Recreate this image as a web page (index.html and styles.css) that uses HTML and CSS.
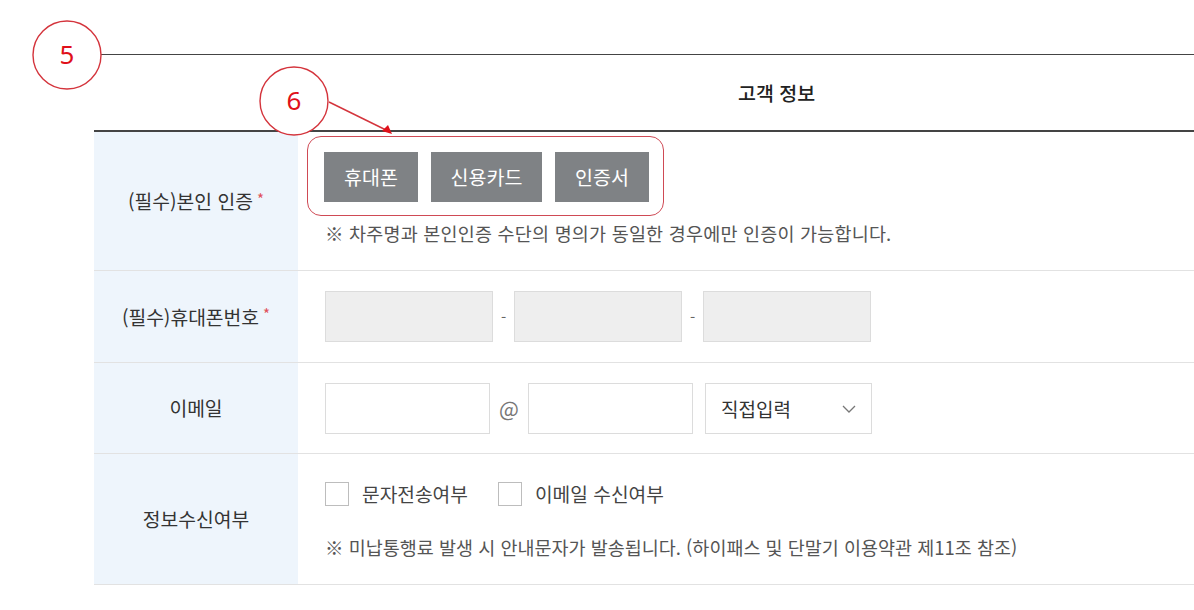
FILE: index.html
```html
<!DOCTYPE html>
<html lang="ko">
<head>
<meta charset="utf-8">
<title>고객 정보</title>
<link rel="stylesheet" href="styles.css">
</head>
<body>
<div class="page">
  <section class="info">
    <div class="title-row">고객 정보</div>

    <div class="row row-auth">
      <div class="label">(필수)본인 인증<span class="req">*</span></div>
      <div class="cell">
        <div class="auth-group">
          <button class="btn btn-sm">휴대폰</button>
          <button class="btn btn-lg">신용카드</button>
          <button class="btn btn-sm">인증서</button>
        </div>
        <p class="note note-auth">※ 차주명과 본인인증 수단의 명의가 동일한 경우에만 인증이 가능합니다.</p>
      </div>
    </div>

    <div class="row row-phone">
      <div class="label">(필수)휴대폰번호<span class="req">*</span></div>
      <div class="cell fields">
        <span class="box box-gray"></span>
        <span class="sep">-</span>
        <span class="box box-gray"></span>
        <span class="sep">-</span>
        <span class="box box-gray"></span>
      </div>
    </div>

    <div class="row row-mail">
      <div class="label">이메일</div>
      <div class="cell fields">
        <span class="box box-mail"></span>
        <span class="at">@</span>
        <span class="box box-mail"></span>
        <span class="select">직접입력
          <svg class="chev" width="14" height="8" viewBox="0 0 14 8"><path d="M1 1l6 6 6-6" fill="none" stroke="#777" stroke-width="1.3"/></svg>
        </span>
      </div>
    </div>

    <div class="row row-recv">
      <div class="label">정보수신여부</div>
      <div class="cell">
        <div class="checks">
          <span class="chk"></span><span class="chk-label">문자전송여부</span>
          <span class="chk"></span><span class="chk-label">이메일 수신여부</span>
        </div>
        <p class="note note-recv">※ 미납통행료 발생 시 안내문자가 발송됩니다. (하이패스 및 단말기 이용약관 제11조 참조)</p>
      </div>
    </div>
  </section>

  <svg class="annot" width="1194" height="610" viewBox="0 0 1194 610">
    <circle cx="67" cy="55" r="34" fill="#fff" stroke="#d4343c" stroke-width="1.4"/>
    <text x="67" y="64" text-anchor="middle" class="num">5</text>
    <circle cx="294" cy="101" r="34" fill="#fff" stroke="#d4343c" stroke-width="1.4"/>
    <text x="294" y="110" text-anchor="middle" class="num">6</text>
    <line x1="329" y1="102" x2="386" y2="130" stroke="#d4343c" stroke-width="1.4"/>
    <path d="M392 134 L382 131 L388 125 Z" fill="#e0101a"/>
  </svg>
</div>
</body>
</html>
```

FILE: styles.css
```css
* { box-sizing: border-box; }
html, body { margin: 0; padding: 0; background: #fff; }
body {
  font-family: "Noto Sans CJK KR", "Noto Sans", sans-serif;
  color: #333;
  font-size: 18px;
  overflow: hidden;
}
.page { position: relative; width: 1194px; height: 610px; }
.info { padding-top: 54px; margin-left: 94px; }

.title-row {
  border-top: 1px solid #444;
  border-bottom: 2px solid #444;
  height: 78px;
  display: flex;
  align-items: center;
  padding-left: 644px;
  font-size: 19.5px;
  font-weight: 500;
  color: #222;
}

.row {
  display: grid;
  grid-template-columns: 204px 1fr;
  border-bottom: 1px solid #e2e2e2;
}
.label {
  background: #eef5fc;
  display: flex;
  align-items: center;
  justify-content: center;
  font-size: 19.3px;
  color: #333;
}
.req { color: #e0505a; font-size: 15px; margin-left: 4px; position: relative; top: -3px; }
.cell { padding-left: 27px; }

.row-auth { height: 139px; }
.row-auth .cell { padding-left: 9px; padding-top: 4px; }
.auth-group {
  display: inline-flex;
  gap: 13px;
  border: 1.5px solid #cf4a55;
  border-radius: 14px;
  padding: 14.5px 14px 13.5px 16px;
}
.btn {
  font-family: inherit;
  height: 50px;
  padding: 0;
  border: 0;
  background: #7f8285;
  color: #fff;
  font-size: 19.5px;
}
.btn-sm { width: 94px; }
.btn-lg { width: 111px; }
.note {
  margin: 0;
  color: #555;
  font-size: 18.5px;
  line-height: 26px;
}
.note-auth { margin-top: 4px; margin-left: 18px; letter-spacing: 0.2px; }

.fields { display: flex; align-items: flex-start; padding-top: 20px; }
.row-phone { height: 92px; }
.row-mail { height: 91px; }
.box { display: block; height: 51px; border: 1px solid #dcdcdc; }
.box-gray { width: 168px; background: #eeeeee; }
.sep { width: 21px; text-align: center; line-height: 51px; color: #666; font-size: 15px; }
.box-mail { width: 165px; background: #fff; }
.at { width: 38px; text-align: center; line-height: 51px; color: #777; font-size: 21px; }
.select {
  margin-left: 12px;
  width: 167px;
  height: 51px;
  border: 1px solid #dcdcdc;
  display: flex;
  align-items: center;
  justify-content: space-between;
  padding: 0 15px 0 15px;
  font-size: 19px;
  color: #333;
}
.chev { display: block; }

.row-recv { height: 131px; }
.row-recv .cell { padding-top: 28px; }
.checks { display: flex; align-items: center; height: 24px; }
.chk { width: 24px; height: 24px; border: 1px solid #bdbdbd; background: #fff; flex: none; }
.chk-label { margin-left: 13px; margin-right: 30px; font-size: 19.2px; color: #444; }
.note-recv { margin-top: 28px; }

.annot { position: absolute; left: 0; top: 0; pointer-events: none; }
.num { font-family: "Noto Sans", sans-serif; font-size: 26px; fill: #e0101a; }
```
